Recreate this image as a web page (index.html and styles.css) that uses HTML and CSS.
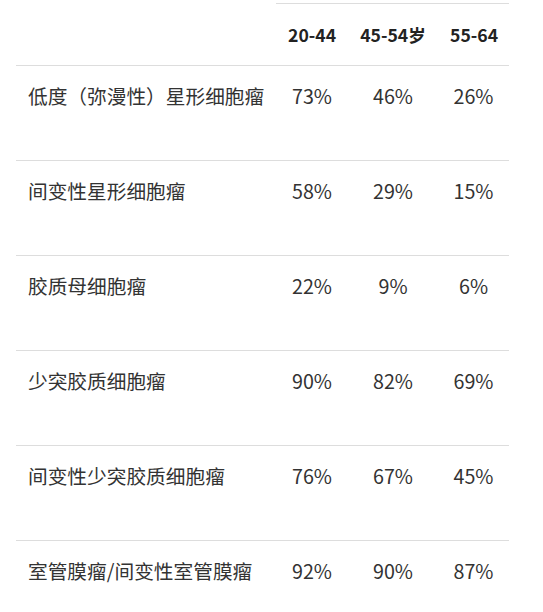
FILE: index.html
```html
<!DOCTYPE html>
<html lang="zh-CN">
<head>
<meta charset="utf-8">
<title>生存率</title>
<link rel="stylesheet" href="styles.css">
</head>
<body>
<table class="rates">
  <colgroup>
    <col class="c-name">
    <col class="c-a">
    <col class="c-b">
    <col class="c-c">
  </colgroup>
  <thead>
    <tr>
      <th class="blank"></th>
      <th>20-44</th>
      <th>45-54岁</th>
      <th>55-64</th>
    </tr>
  </thead>
  <tbody>
    <tr><td>低度（弥漫性）星形细胞瘤</td><td>73%</td><td>46%</td><td>26%</td></tr>
    <tr><td>间变性星形细胞瘤</td><td>58%</td><td>29%</td><td>15%</td></tr>
    <tr><td>胶质母细胞瘤</td><td>22%</td><td>9%</td><td>6%</td></tr>
    <tr><td>少突胶质细胞瘤</td><td>90%</td><td>82%</td><td>69%</td></tr>
    <tr><td>间变性少突胶质细胞瘤</td><td>76%</td><td>67%</td><td>45%</td></tr>
    <tr><td>室管膜瘤/间变性室管膜瘤</td><td>92%</td><td>90%</td><td>87%</td></tr>
  </tbody>
</table>
</body>
</html>
```

FILE: styles.css
```css
html, body {
  margin: 0;
  padding: 0;
  background: #fff;
}

body {
  font-family: "Noto Sans CJK SC", "Noto Sans", sans-serif;
  color: #333;
}

.rates {
  margin: 3px 0 0 16px;
  width: 493px;
  table-layout: fixed;
  border-collapse: separate;
  border-spacing: 0;
  font-size: 19.7px;
}

.c-name { width: 260px; }
.c-a { width: 72px; }
.c-b { width: 90px; }
.c-c { width: 71px; }

.rates th {
  font-size: 17.6px;
  font-weight: 700;
  color: #222;
  line-height: 30px;
  padding: 16px 12px 15px;
  text-align: center;
  border-top: 1px solid #ddd;
  border-bottom: 1px solid #ddd;
  white-space: nowrap;
}

.rates th.blank {
  border-top: 1px solid transparent;
}

.rates td {
  line-height: 30px;
  padding: 15px 12px 49px;
  text-align: center;
  vertical-align: top;
  border-bottom: 1px solid #ddd;
  white-space: nowrap;
}

.rates td:first-child {
  text-align: left;
}
```
